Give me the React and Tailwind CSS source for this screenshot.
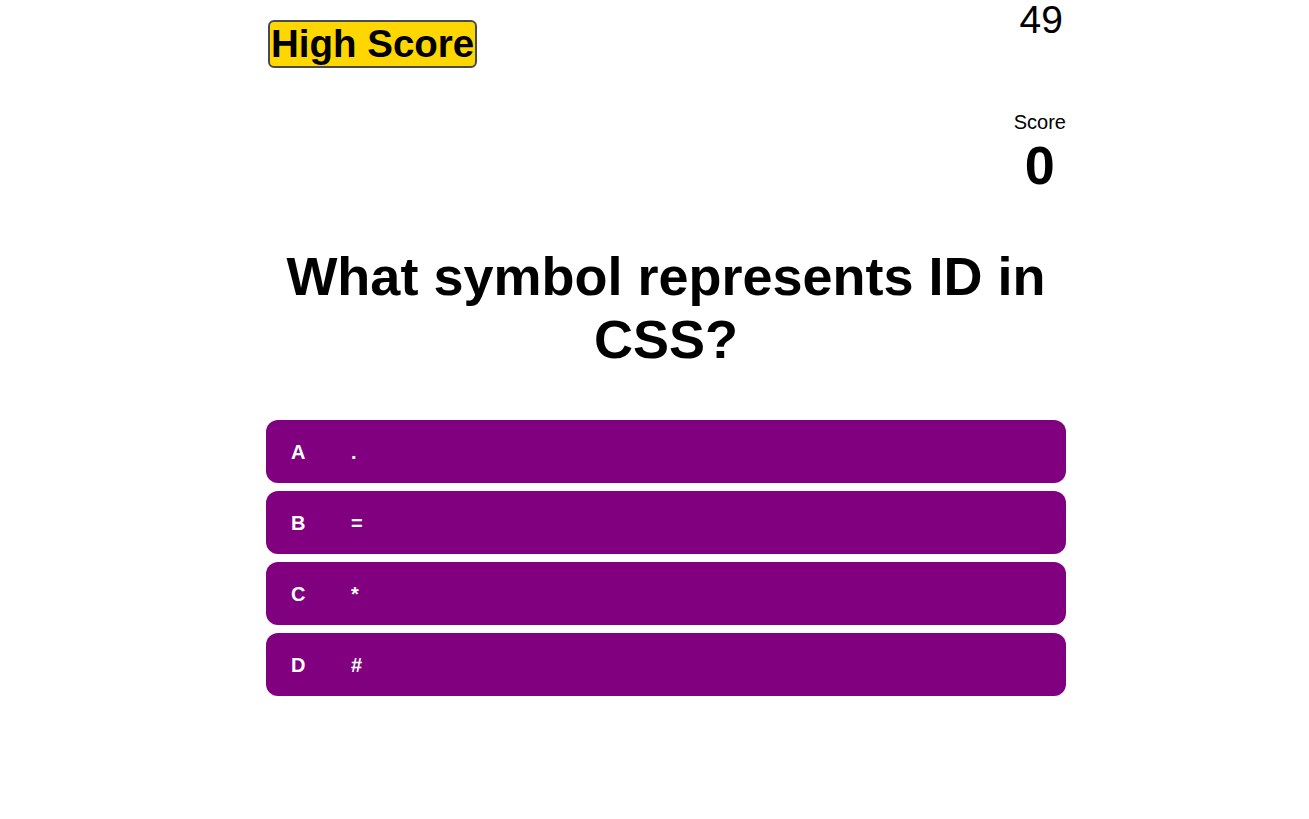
import { useState } from 'react'

const QUESTION = {
  text: 'What symbol represents ID in CSS?',
  choices: [
    { key: 'A', label: '.' },
    { key: 'B', label: '=' },
    { key: 'C', label: '*' },
    { key: 'D', label: '#' }
  ]
}

export default function App() {
  const [score] = useState(0)
  const [timeLeft] = useState(49)

  return (
    <div className="min-h-screen bg-white text-black font-['Liberation_Sans',Arial,sans-serif]">
      <div className="mx-auto w-[825px] pl-[24px] pr-[1px]">
        {/* Header */}
        <div className="flex items-start justify-between">
          <button className="ml-[2px] mt-[20px] h-[48px] rounded-[6px] border-2 border-[#4a4a4a] bg-[#ffd700] px-[1px] text-[38.5px] font-bold leading-[42px]">
            High Score
          </button>
          <div className="mr-[3px] text-[39px] leading-none">{timeLeft}</div>
        </div>

        {/* Score */}
        <div className="mt-[43px] flex justify-end">
          <div className="text-center">
            <p className="text-[20px] leading-[23px]">Score</p>
            <p className="text-[54px] font-bold leading-[62px]">{score}</p>
          </div>
        </div>

        {/* Question */}
        <h1 className="mt-[49px] text-center text-[54px] font-bold leading-[63px]">
          {QUESTION.text}
        </h1>

        {/* Choices */}
        <div className="mt-[49px] flex flex-col gap-[8px]">
          {QUESTION.choices.map((choice) => (
            <button
              key={choice.key}
              className="flex h-[63px] items-center rounded-[12px] bg-[#800080] pl-[25px] text-left text-[20px] font-bold text-white"
            >
              <span className="w-[60px]">{choice.key}</span>
              <span>{choice.label}</span>
            </button>
          ))}
        </div>
      </div>
    </div>
  )
}
